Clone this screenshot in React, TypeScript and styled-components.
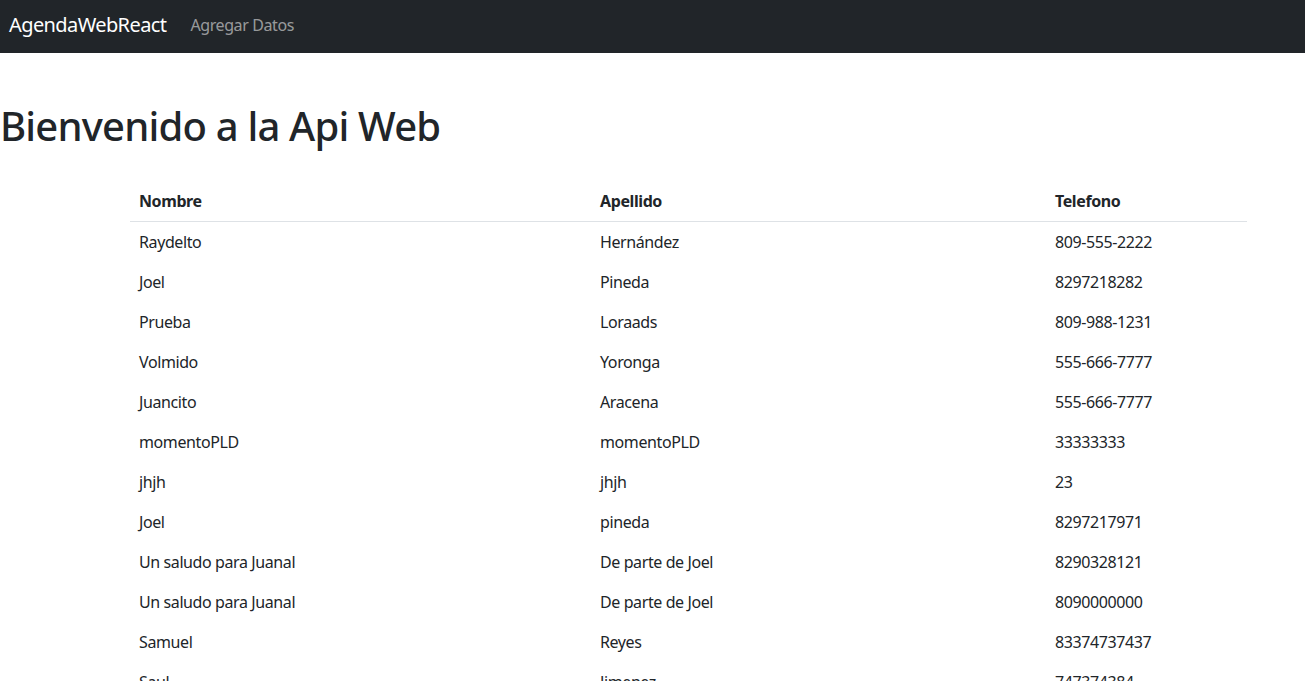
import React from "react";
import styled, { createGlobalStyle } from "styled-components";

const Global = createGlobalStyle`
  html, body { margin: 0; padding: 0; background: #fff; }
  body {
    font-family: "Noto Sans", "Open Sans", sans-serif;
    font-size: 16px;
    line-height: 1.5;
    letter-spacing: -0.025em;
    color: #212529;
  }
  * { box-sizing: border-box; }
`;

const Navbar = styled.nav`
  height: 53px;
  background: #212529;
  display: flex;
  align-items: center;
  padding: 0 9px 4px;
`;

const Brand = styled.a`
  font-size: 20px;
  letter-spacing: -0.03em;
  color: #fff;
  text-decoration: none;
  margin-right: 24px;
  white-space: nowrap;
`;

const NavLink = styled.a`
  font-size: 16px;
  color: rgba(255, 255, 255, 0.55);
  text-decoration: none;
`;

const Main = styled.main`
  padding-top: 49px;
`;

const Title = styled.h1`
  margin: 0 0 31px;
  font-size: 40px;
  font-weight: 500;
  line-height: 48px;
  letter-spacing: -0.02em;
`;

const Table = styled.table`
  margin: 0 58px 0 130px;
  width: 1117px;
  border-collapse: collapse;
  table-layout: fixed;
`;

const Th = styled.th<{ $w?: number }>`
  text-align: left;
  font-weight: 700;
  padding: 8px 9px;
  line-height: 24px;
  border-bottom: 1px solid #dee2e6;
  width: ${(p) => (p.$w ? `${p.$w}px` : "auto")};
`;

const Td = styled.td`
  padding: 8px 9px;
  line-height: 24px;
  font-weight: 400;
`;

const rows: [string, string, string][] = [
  ["Raydelto", "Hernández", "809-555-2222"],
  ["Joel", "Pineda", "8297218282"],
  ["Prueba", "Loraads", "809-988-1231"],
  ["Volmido", "Yoronga", "555-666-7777"],
  ["Juancito", "Aracena", "555-666-7777"],
  ["momentoPLD", "momentoPLD", "33333333"],
  ["jhjh", "jhjh", "23"],
  ["Joel", "pineda", "8297217971"],
  ["Un saludo para Juanal", "De parte de Joel", "8290328121"],
  ["Un saludo para Juanal", "De parte de Joel", "8090000000"],
  ["Samuel", "Reyes", "83374737437"],
  ["Saul", "Jimenez", "747374384"],
];

export default function App() {
  return (
    <>
      <Global />
      <Navbar>
        <Brand href="#">AgendaWebReact</Brand>
        <NavLink href="#">Agregar Datos</NavLink>
      </Navbar>
      <Main>
        <Title>Bienvenido a la Api Web</Title>
        <Table>
          <thead>
            <tr>
              <Th $w={461}>Nombre</Th>
              <Th $w={455}>Apellido</Th>
              <Th>Telefono</Th>
            </tr>
          </thead>
          <tbody>
            {rows.map((r, i) => (
              <tr key={i}>
                <Td>{r[0]}</Td>
                <Td>{r[1]}</Td>
                <Td>{r[2]}</Td>
              </tr>
            ))}
          </tbody>
        </Table>
      </Main>
    </>
  );
}
